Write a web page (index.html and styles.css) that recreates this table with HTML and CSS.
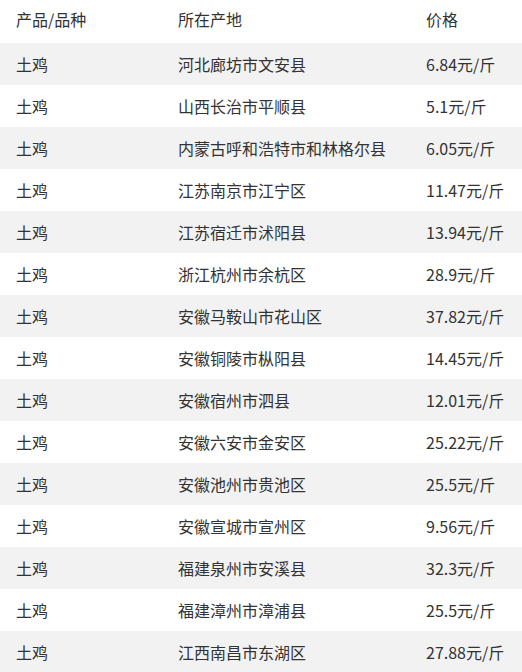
FILE: index.html
```html
<!DOCTYPE html>
<html lang="zh">
<head>
<meta charset="utf-8">
<link rel="stylesheet" href="styles.css">
</head>
<body>
<table class="price-table">
  <thead>
    <tr><th class="c1">产品/品种</th><th class="c2">所在产地</th><th class="c3">价格</th></tr>
  </thead>
  <tbody>
    <tr><td>土鸡</td><td>河北廊坊市文安县</td><td>6.84元/斤</td></tr>
    <tr><td>土鸡</td><td>山西长治市平顺县</td><td>5.1元/斤</td></tr>
    <tr><td>土鸡</td><td>内蒙古呼和浩特市和林格尔县</td><td>6.05元/斤</td></tr>
    <tr><td>土鸡</td><td>江苏南京市江宁区</td><td>11.47元/斤</td></tr>
    <tr><td>土鸡</td><td>江苏宿迁市沭阳县</td><td>13.94元/斤</td></tr>
    <tr><td>土鸡</td><td>浙江杭州市余杭区</td><td>28.9元/斤</td></tr>
    <tr><td>土鸡</td><td>安徽马鞍山市花山区</td><td>37.82元/斤</td></tr>
    <tr><td>土鸡</td><td>安徽铜陵市枞阳县</td><td>14.45元/斤</td></tr>
    <tr><td>土鸡</td><td>安徽宿州市泗县</td><td>12.01元/斤</td></tr>
    <tr><td>土鸡</td><td>安徽六安市金安区</td><td>25.22元/斤</td></tr>
    <tr><td>土鸡</td><td>安徽池州市贵池区</td><td>25.5元/斤</td></tr>
    <tr><td>土鸡</td><td>安徽宣城市宣州区</td><td>9.56元/斤</td></tr>
    <tr><td>土鸡</td><td>福建泉州市安溪县</td><td>32.3元/斤</td></tr>
    <tr><td>土鸡</td><td>福建漳州市漳浦县</td><td>25.5元/斤</td></tr>
    <tr><td>土鸡</td><td>江西南昌市东湖区</td><td>27.88元/斤</td></tr>
  </tbody>
</table>
</body>
</html>
```
FILE: styles.css
```css
html, body {
  margin: 0;
  padding: 0;
  background: #fff;
}
body {
  font-family: "Microsoft YaHei", "Noto Sans CJK SC", "Noto Sans", sans-serif;
  font-size: 16px;
  color: #333;
}
.price-table {
  width: 522px;
  border-collapse: collapse;
  table-layout: fixed;
}
.price-table th,
.price-table td {
  padding: 0 0 0 16px;
  text-align: left;
  font-weight: normal;
  white-space: nowrap;
  line-height: 20px;
}
.price-table th {
  height: 43px;
  padding-bottom: 6px;
  box-sizing: border-box;
  vertical-align: middle;
}
.price-table td {
  height: 42px;
  box-sizing: border-box;
  vertical-align: middle;
}
.c1 { width: 162px; }
.c2 { width: 248px; }
.c3 { width: 112px; }
.price-table tbody tr:nth-child(odd) {
  background: #f2f2f2;
}
```
